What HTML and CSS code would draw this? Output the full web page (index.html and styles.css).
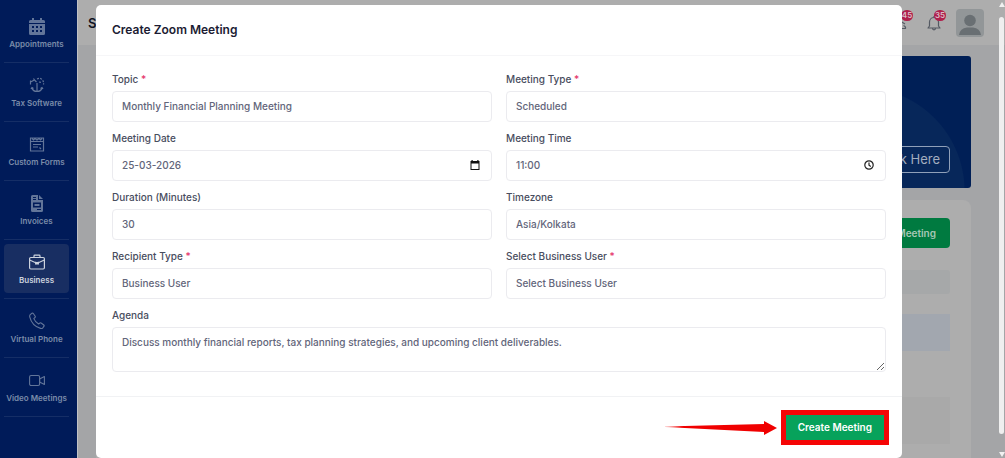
FILE: index.html
```html
<!DOCTYPE html>
<html lang="en">
<head>
<meta charset="utf-8">
<title>Create Zoom Meeting</title>
<link rel="stylesheet" href="styles.css">
</head>
<body>
<div class="app">
  <nav class="sidebar">
    <a class="nav-item" href="#"><span class="nav-link">
      <svg class="nav-icon" viewBox="0 0 16 18"><path fill="currentColor" fill-rule="evenodd" d="M3 1h2v2h6V1h2v2h1.500Q16 3 16 4.500V6H0V4.500Q0 3 1.500 3H3zM0 7h16v9.500Q16 18 14.500 18h-13Q0 18 0 16.500zM3 9v2h2V9zm4 0v2h2V9zm4 0v2h2V9zm-8 4v2h2v-2zm4 0v2h2v-2zm4 0v2h2v-2z"/></svg>
      <span>Appointments</span></span></a>
    <a class="nav-item" href="#"><span class="nav-link">
      <svg class="nav-icon" viewBox="0 0 16 18" fill="none" stroke="currentColor" stroke-width="1.200"><path d="M1.500 8.500V4.500M1.500 6l4-2 2 2M4.500 2.500l1 1.500M8 7v8.500M3 12q1 3.500 5 3.500t5-3.500M2 13l1-1.500 1.500 1M11.500 12.500l1.500-1 1 1.500"/><path stroke-dasharray="2 1.200" d="M8 3q3-1.500 5 .5t1.500 5M10 6l3 .5"/></svg>
      <span>Tax Software</span></span></a>
    <a class="nav-item" href="#"><span class="nav-link">
      <svg class="nav-icon" viewBox="0 0 16 18" fill="none" stroke="currentColor" stroke-width="1.200"><path d="M1.500 3h13v13h-13zM1.500 6.500h13M3 3.500l1.500 1.500L6 3.500 8 5l2-1.500L11.500 5 13 3.500M4 9.500h8M4 12h5M10.500 12.500l1.500 1.500"/></svg>
      <span>Custom Forms</span></span></a>
    <a class="nav-item" href="#"><span class="nav-link">
      <svg class="nav-icon" viewBox="0 0 16 18"><path fill="currentColor" fill-rule="evenodd" d="M3.500 1H9v5h5v10.500Q14 18 12.500 18h-9Q2 18 2 16.500v-14Q2 1 3.500 1zM10 1l4 4h-4zM4 3v1h3V3zm0 2v1h3V5zm0 3.500v5h8v-5zm1.500 1.500h5v2h-5zM8 15v1h4v-1z"/></svg>
      <span>Invoices</span></span></a>
    <a class="nav-item" href="#" aria-current="page"><span class="nav-link active">
      <svg class="nav-icon" viewBox="0 0 16 18" fill="none" stroke="currentColor" stroke-width="1.200"><rect x=".6" y="4.500" width="14.800" height="11.500" rx="1.200"/><path d="M5 4.500V3q0-.8.8-.8h4.400q.8 0 .8.800v1.500M.6 7l6 2.700h2.800l6-2.700M6.600 8.800v2h2.800v-2"/></svg>
      <span>Business</span></span></a>
    <a class="nav-item" href="#"><span class="nav-link">
      <svg class="nav-icon" viewBox="0 0 16 18" fill="none" stroke="currentColor" stroke-width="1.100" stroke-linejoin="round"><path d="M1.200 2.600L3 1.300q.8-.5 1.300.2l1.900 2.800q.4.700-.2 1.200L4.800 6.600q1.400 3.400 4.800 5.400l1.300-1q.6-.5 1.200 0l2.700 2q.6.500.2 1.200l-1.200 1.600q-.8 1-2.300.6Q3 14 .8 5.200.4 3.600 1.200 2.600z"/></svg>
      <span>Virtual Phone</span></span></a>
    <a class="nav-item" href="#"><span class="nav-link">
      <svg class="nav-icon" viewBox="0 0 16 18" fill="none" stroke="currentColor" stroke-width="1.100" stroke-linejoin="round"><rect x=".6" y="4.500" width="10" height="10" rx="1.500"/><path d="M10.600 8l4.800-2.500v8L10.600 11z"/></svg>
      <span>Video Meetings</span></span></a>
  </nav>
  <main class="main">
    <header class="topbar">
      <span class="page-name">S</span>
      <div class="tools">
        <span class="tool">
          <svg class="tool-icon" viewBox="0 0 14 16" fill="none" stroke="currentColor" stroke-width="1.200"><path d="M3 4l8 5M7 8q-5 1-6 5.500h10.500q.5-2-2-3"/></svg>
          <span class="badge">45</span>
        </span>
        <span class="tool">
          <svg class="tool-icon" viewBox="0 0 14 16" fill="none" stroke="currentColor" stroke-width="1.200" stroke-linejoin="round"><path d="M7 1v1.500M2.500 11V7a4.500 4.500 0 0 1 9 0v4l1.500 2H1zM5.500 13q0 1.800 1.500 1.800T8.500 13"/></svg>
          <span class="badge">35</span>
        </span>
        <svg class="avatar" viewBox="0 0 28 28"><rect width="28" height="28" rx="4" fill="#929698"/><circle cx="14" cy="11.500" r="5.800" fill="#696f73"/><path d="M3 26q1-7 8-7.500h6q7 .5 8 7.500z" fill="#696f73"/></svg>
      </div>
    </header>
    <div class="content">
      <section class="banner"><button class="banner-button" type="button">Click Here</button></section>
      <section class="panel">
        <div class="panel-head"><button class="panel-button" type="button">Create Meeting</button></div>
        <div class="strip"></div>
        <div class="notice"></div>
        <div class="block"></div>
      </section>
    </div>
  </main>
</div>

<div class="scrollbar" aria-hidden="true">
  <svg class="scroll-arrow" viewBox="0 0 6 5"><path fill="#f1f1f1" d="M3 0l3 5H0z"/></svg>
  <span class="thumb"></span>
  <svg class="scroll-arrow" viewBox="0 0 6 5"><path fill="#f1f1f1" d="M0 0h6L3 5z"/></svg>
</div>

<form class="modal" role="dialog" aria-labelledby="modal-title">
  <div class="modal-head"><h1 class="modal-title" id="modal-title">Create Zoom Meeting</h1></div>
  <div class="modal-body">
    <div class="field"><label for="topic">Topic <span class="required">*</span></label>
      <input class="control" id="topic" type="text" value="Monthly Financial Planning Meeting"></div>
    <div class="field"><label for="type">Meeting Type <span class="required">*</span></label>
      <select class="control" id="type"><option>Scheduled</option></select></div>
    <div class="field"><label for="date">Meeting Date</label>
      <div class="control-wrap"><input class="control" id="date" type="text" value="25-03-2026">
        <svg class="control-icon" viewBox="0 0 12 12"><path fill="#111" fill-rule="evenodd" d="M2.500 1h1.200v1h4.600V1h1.200v1H10.500v9H1.500V2h1zM2.500 4.500V10h7V4.500z"/></svg></div></div>
    <div class="field"><label for="time">Meeting Time</label>
      <div class="control-wrap"><input class="control" id="time" type="text" value="11:00">
        <svg class="control-icon" viewBox="0 0 12 12" fill="none" stroke="#222" stroke-width="1.200"><circle cx="6" cy="6" r="4.200"/><path d="M6 3.500v2.700l1.800 1.300"/></svg></div></div>
    <div class="field"><label for="duration">Duration (Minutes)</label>
      <input class="control" id="duration" type="text" inputmode="numeric" value="30"></div>
    <div class="field"><label for="zone">Timezone</label>
      <select class="control" id="zone"><option>Asia/Kolkata</option></select></div>
    <div class="field"><label for="recipient">Recipient Type <span class="required">*</span></label>
      <select class="control" id="recipient"><option>Business User</option></select></div>
    <div class="field"><label for="user">Select Business User <span class="required">*</span></label>
      <select class="control" id="user"><option>Select Business User</option></select></div>
    <div class="field wide"><label for="agenda">Agenda</label>
      <textarea class="control agenda" id="agenda">Discuss monthly financial reports, tax planning strategies, and upcoming client deliverables.</textarea></div>
  </div>
  <div class="modal-foot">
    <svg class="arrow" viewBox="0 0 112 14"><defs><linearGradient id="tail"><stop offset="0" stop-color="#f00000" stop-opacity=".3"/><stop offset=".15" stop-color="#f00000"/></linearGradient></defs><path fill="url(#tail)" d="M0 5.500L99 3V0l13 7-13 7v-3L0 6z"/></svg>
    <button class="submit" type="submit">Create Meeting</button>
  </div>
</form>
</body>
</html>
```
FILE: styles.css
```css
* { box-sizing: border-box; }

body {
  margin: 0;
  height: 100vh;
  overflow: hidden;
  background: #a4a5a7;
  font-family: Inter, "Liberation Sans", sans-serif;
}

button, input, select, textarea { font-family: inherit; }

.app { display: flex; height: 100vh; overflow: hidden; }

/* Sidebar */
.sidebar {
  flex: none;
  width: 78px;
  padding: 4px 8px 0 4px;
  background: #001b59;
  border-right: 1px solid #c0c2c6;
}
.nav-item {
  display: block;
  height: 59px;
  padding: 4px 0 5px;
  border-bottom: 1px solid #152e66;
  color: #7b8ca9;
  font-size: 8px;
  font-weight: 600;
  line-height: 12px;
  text-decoration: none;
  white-space: nowrap;
}
.nav-link {
  display: flex;
  flex-direction: column;
  align-items: center;
  gap: 3px;
  height: 49px;
  padding-top: 9px;
  border-radius: 4px;
}
.nav-link.active { background: #182e62; color: #ccd3de; }
.nav-icon { width: 16px; height: 18px; opacity: .8; }
.active .nav-icon { opacity: 1; }

/* Page behind the dialog */
.main { flex: 1; min-width: 0; }
.topbar {
  display: flex;
  align-items: center;
  justify-content: space-between;
  height: 45px;
  padding: 0 21px 0 10px;
  background: #adadad;
}
.page-name { color: #10131f; font-size: 13px; font-weight: 600; }
.tools { display: flex; align-items: center; gap: 15px; }
.tool { position: relative; width: 14px; height: 16px; color: #555a63; }
.tool:first-child { margin-right: 4px; }
.tool-icon { display: block; width: 14px; height: 16px; }
.badge {
  position: absolute;
  top: -5px;
  right: -5px;
  width: 12px;
  border-radius: 6px;
  background: #b0204c;
  color: #d9bcc6;
  font-size: 8px;
  font-weight: 600;
  line-height: 11px;
  text-align: center;
}
.avatar { width: 28px; height: 28px; }
.content { padding: 11px 34px 0 18px; }
.banner {
  display: flex;
  align-items: flex-end;
  justify-content: flex-end;
  height: 132px;
  padding: 0 21px 15px;
  border-radius: 3px;
  background: radial-gradient(circle at calc(100% - 110px) 135px, #07275a 103px, #001f56 104px);
}
.banner-button {
  padding: 0 9px;
  border: 1px solid #90a0b9;
  border-radius: 4px;
  background: none;
  color: #a3aebf;
  font-size: 13px;
  line-height: 25px;
}
.panel {
  height: 300px;
  margin-top: 12px;
  padding: 18px 21px;
  border-radius: 8px;
  background: #adadad;
}
.panel-head { display: flex; justify-content: flex-end; }
.panel-button {
  padding: 0 14px;
  border: 0;
  border-radius: 4px;
  background: #007a40;
  color: #a6c7b5;
  font-size: 10px;
  font-weight: 600;
  line-height: 30px;
}
.strip { height: 24px; margin-top: 22px; background: #a6a8a9; border-radius: 3px; }
.notice { height: 37px; margin-top: 20px; background: #a2a7af; }
.block { height: 47px; margin-top: 46px; background: #a9a9a9; }

/* Scrollbar */
.scrollbar {
  position: absolute;
  inset: 2px 0 1px auto;
  display: flex;
  flex-direction: column;
  align-items: center;
  width: 7px;
}
.scroll-arrow { width: 6px; height: 5px; }
.thumb {
  flex: 1;
  width: 5px;
  margin: 10px 0 18px;
  border-radius: 3px;
  background: #efefef;
}

/* Dialog */
.modal {
  position: absolute;
  inset: 5px 103px auto 96px;
  border-radius: 5px;
  background: #fff;
}
.modal-head { padding: 15px 16px; border-bottom: 1px solid #f6f6f8; }
.modal-title {
  margin: 0;
  color: #1c1c33;
  font-size: 12px;
  font-weight: 600;
  line-height: 20px;
}
.modal-body {
  display: grid;
  grid-template-columns: 1fr 1fr;
  gap: 8px 14px;
  padding: 15px 16px 24px;
}
.field {
  display: flex;
  flex-direction: column;
  gap: 4px;
  color: #484d5e;
  font-size: 10px;
  font-weight: 500;
  line-height: 16px;
}
.wide { grid-column: 1 / -1; }
.required { color: #e5346a; }
.control {
  display: block;
  width: 100%;
  height: 31px;
  padding: 0 9px 1px;
  border: 1px solid #ebebef;
  border-radius: 4px;
  background: #fff;
  color: #62657a;
  font-size: 10px;
  font-weight: 500;
  line-height: 16px;
  appearance: none;
}
.control-wrap { position: relative; }
.control-icon {
  position: absolute;
  top: 9px;
  right: 11px;
  width: 12px;
  height: 12px;
}
.agenda { height: 45px; padding: 6px 9px; resize: vertical; }
.modal-foot {
  display: flex;
  align-items: center;
  justify-content: flex-end;
  gap: 4px;
  padding: 13px;
  border-top: 1px solid #f1f2f4;
}
.arrow { width: 112px; height: 14px; }
.submit {
  padding: 0 12px;
  border: 5px solid #f50505;
  background: #07a25b;
  color: #fff;
  font-size: 10px;
  font-weight: 600;
  line-height: 25px;
}
```
